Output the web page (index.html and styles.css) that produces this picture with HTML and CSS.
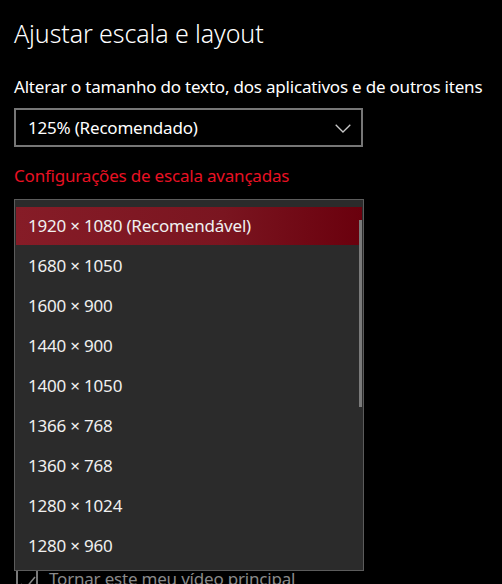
FILE: index.html
```html
<!DOCTYPE html>
<html lang="pt-BR">
<head>
<meta charset="utf-8">
<title>Ajustar escala e layout</title>
<link rel="stylesheet" href="styles.css">
</head>
<body>
<main class="page">
  <h1 class="title">Ajustar escala e layout</h1>
  <p class="label">Alterar o tamanho do texto, dos aplicativos e de outros itens</p>
  <div class="combo">
    <span class="combo-text">125% (Recomendado)</span>
    <svg class="chevron" width="16" height="9" viewBox="0 0 16 9"><path d="M0.7 0.7 L8 8 L15.3 0.7" fill="none" stroke="#c8c8c8" stroke-width="1.3"/></svg>
  </div>
  <a class="link" href="#">Configurações de escala avançadas</a>
  <div class="dropdown-wrap">
    <ul class="dropdown">
      <li class="item selected">1920 × 1080 (Recomendável)</li>
      <li class="item">1680 × 1050</li>
      <li class="item">1600 × 900</li>
      <li class="item">1440 × 900</li>
      <li class="item">1400 × 1050</li>
      <li class="item">1366 × 768</li>
      <li class="item">1360 × 768</li>
      <li class="item">1280 × 1024</li>
      <li class="item">1280 × 960</li>
    </ul>
    <div class="scrollbar"></div>
  </div>
  <div class="check-row">
    <span class="checkbox"><svg width="20" height="20" viewBox="0 0 20 20"><path d="M3 13 L7.5 17.5 M7.5 17.5 L17 6" fill="none" stroke="#8a8a8a" stroke-width="1.5"/></svg></span>
    <span class="check-text">Tornar este meu vídeo principal</span>
  </div>
</main>
</body>
</html>
```
FILE: styles.css
```css
html, body {
  margin: 0;
  padding: 0;
  background: #000;
  height: 584px;
  overflow: hidden;
}
body {
  font-family: "Noto Sans", "Open Sans", sans-serif;
  color: #fff;
}
.page {
  padding: 17px 0 0 14px;
  display: flex;
  flex-direction: column;
  align-items: flex-start;
}
.title {
  margin: 0;
  font-size: 25px;
  font-weight: 300;
  line-height: 32px;
  letter-spacing: -0.1px;
}
.label {
  margin: 27px 0 0;
  font-size: 17px;
  line-height: 22px;
  letter-spacing: -0.2px;
}
.combo {
  margin-top: 10px;
  box-sizing: border-box;
  width: 349px;
  height: 39px;
  border: 2px solid #767676;
  display: flex;
  align-items: center;
  justify-content: space-between;
  padding: 0 10px 0 12px;
}
.combo-text {
  font-size: 17px;
  line-height: 22px;
  letter-spacing: -0.2px;
}
.chevron {
  margin-top: 1px;
}
.link {
  margin-top: 18px;
  font-size: 17px;
  line-height: 22px;
  color: #e81123;
  text-decoration: none;
  letter-spacing: -0.2px;
}
.dropdown-wrap {
  position: relative;
  margin-top: 12px;
}
.dropdown {
  list-style: none;
  margin: 0;
  box-sizing: border-box;
  width: 350px;
  padding: 7px 1px 5px;
  display: flex;
  flex-direction: column;
  gap: 2px;
  background: #2b2b2b;
  border: 1px solid #5c5c5c;
}
.item {
  height: 38px;
  padding-left: 12px;
  display: flex;
  align-items: center;
  font-size: 17px;
  line-height: 22px;
  letter-spacing: -0.2px;
  color: #f0f0f0;
}
.item.selected {
  background: linear-gradient(90deg, #861c27 0%, #7a1520 60%, #6a000d 100%);
}
.scrollbar {
  position: absolute;
  top: 21px;
  right: 2px;
  width: 3px;
  height: 187px;
  background: #7a7a7a;
}
.check-row {
  display: flex;
  align-items: flex-start;
  gap: 11px;
  margin-top: -3px;
  padding-left: 2px;
}
.checkbox {
  display: block;
  box-sizing: border-box;
  width: 22px;
  height: 22px;
  border: 2px solid #7a7a7a;
  margin-top: 1px;
}
.checkbox svg { display: block; }
.check-text {
  font-size: 17px;
  line-height: 22px;
  color: #8a8a8a;
  letter-spacing: -0.2px;
}
```
